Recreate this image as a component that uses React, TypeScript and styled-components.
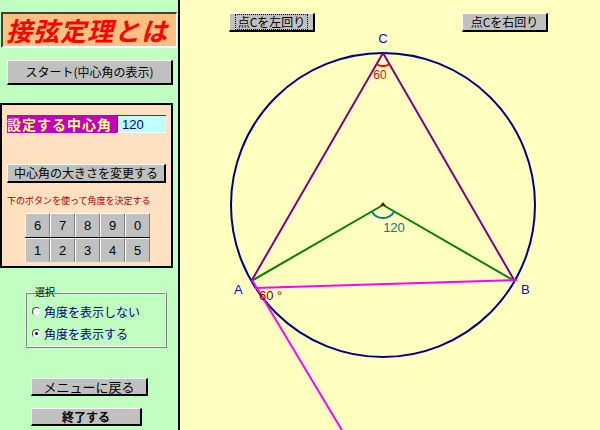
import React from 'react';
import styled, { createGlobalStyle } from 'styled-components';

const GlobalStyle = createGlobalStyle`
  html, body {
    margin: 0;
    padding: 0;
    width: 600px;
    height: 430px;
    overflow: hidden;
  }
  * {
    box-sizing: border-box;
  }
  body {
    font-family: "Noto Sans CJK JP", "Noto Sans", sans-serif;
  }
`;

const Screen = styled.div`
  display: flex;
  width: 600px;
  height: 430px;
`;

const Sidebar = styled.div`
  width: 180px;
  height: 430px;
  background: #c0ffc0;
  border-right: 2px solid #000;
  display: flex;
  flex-direction: column;
  align-items: flex-start;
`;

const Title = styled.div`
  margin: 12px 0 0 1px;
  width: 176px;
  height: 36px;
  background: #ffc080;
  border-style: solid;
  border-width: 2px 1px 2px 2px;
  border-color: #404040 #fff #fff #404040;
  color: #ff0000;
  font-size: 26px;
  font-weight: bold;
  font-style: italic;
  letter-spacing: 1px;
  line-height: 31px;
  padding-left: 3px;
  white-space: nowrap;
`;

const Button = styled.button<{ $w: number; $h: number; $size?: number; $bold?: boolean }>`
  width: ${p => p.$w}px;
  height: ${p => p.$h}px;
  padding: 0;
  background: #c0c0c0;
  border-style: solid;
  border-width: 1px 2px 2px 1px;
  border-color: #fff #000 #000 #fff;
  font-family: "Noto Sans CJK JP", sans-serif;
  font-size: ${p => p.$size ?? 12}px;
  font-weight: ${p => (p.$bold ? 'bold' : 'normal')};
  color: #000;
  line-height: 1;
  display: flex;
  align-items: center;
  justify-content: center;
  white-space: nowrap;
`;

const SideButton = styled(Button)<{ $top: number; $left: number }>`
  margin-top: ${p => p.$top}px;
  margin-left: ${p => p.$left}px;
`;

const Panel = styled.div`
  margin-top: 18px;
  width: 173px;
  height: 165px;
  background: #ffe0c0;
  border: 2px solid #000;
  display: flex;
  flex-direction: column;
  align-items: flex-start;
  padding-left: 5px;
`;

const SettingRow = styled.div`
  margin-top: 10px;
  display: flex;
  height: 18px;
`;

const SettingLabel = styled.div`
  width: 110px;
  height: 18px;
  background: #c000c0;
  color: #ffff80;
  font-size: 14px;
  font-weight: bold;
  line-height: 18px;
  letter-spacing: 1px;
  white-space: nowrap;
`;

const SettingInput = styled.input`
  width: 49px;
  height: 18px;
  background: #c0ffff;
  border-style: solid;
  border-width: 1px 0 1px 1px;
  border-color: #404040 #fff #fff #404040;
  color: #000080;
  font-family: "Liberation Sans", sans-serif;
  font-size: 13px;
  padding: 0 0 0 4px;
  outline: none;
`;

const Hint = styled.div`
  margin-top: 12px;
  color: #a00000;
  font-size: 9px;
  line-height: 11px;
  white-space: nowrap;
`;

const NumPad = styled.div`
  margin: 7px 0 0 18px;
  width: 125px;
  display: grid;
  grid-template-columns: repeat(5, 25px);
  grid-auto-rows: 24px;
  row-gap: 1px;
  background: #000;
`;

const NumKey = styled.div`
  background: #c0c0c0;
  border-style: solid;
  border-width: 1px 1px 0 1px;
  border-color: #fff #808080 #808080 #fff;
  display: flex;
  align-items: center;
  justify-content: center;
  font-family: "Liberation Sans", sans-serif;
  font-size: 13px;
  color: #000;
`;

const Group = styled.fieldset`
  margin: 18px 0 0 25px;
  padding: 0 0 0 6px;
  width: 141px;
  height: 61px;
  border: 1px solid #fff;
  box-shadow: inset 1px 1px 0 #808080, 1px 1px 0 #808080;
  display: flex;
  flex-direction: column;
`;

const Legend = styled.legend`
  padding: 0 2px;
  margin-left: 1px;
  font-size: 10px;
  line-height: 12px;
  color: #000;
`;

const RadioRow = styled.label`
  display: flex;
  align-items: center;
  gap: 3px;
  height: 18px;
  margin-top: 4px;
  color: #000080;
  font-size: 12px;
  white-space: nowrap;
`;

const RadioDot = styled.span<{ $on?: boolean }>`
  width: 9px;
  height: 9px;
  border-radius: 50%;
  background: #fff;
  border: 1px solid #404040;
  border-right-color: #e0e0e0;
  border-bottom-color: #e0e0e0;
  display: flex;
  align-items: center;
  justify-content: center;
  &::after {
    content: '';
    width: 3px;
    height: 3px;
    border-radius: 50%;
    background: ${p => (p.$on ? '#000' : 'transparent')};
  }
`;

const Canvas = styled.div`
  flex: 1;
  height: 430px;
  background: #ffffc0;
  display: grid;
`;

const Toolbar = styled.div`
  grid-area: 1 / 1;
  align-self: start;
  display: flex;
  gap: 147px;
  padding: 13px 0 0 49px;
  z-index: 1;
`;

const FocusText = styled.span`
  border: 1px dotted #000;
  padding: 1px 2px;
`;

const Diagram = styled.svg`
  grid-area: 1 / 1;
  width: 420px;
  height: 430px;
  display: block;
`;

// circle geometry in canvas coordinates
const O = { x: 203, y: 205 };
const R = 152;
const C = { x: 203, y: O.y - R };
const A = { x: O.x - R * Math.sin(Math.PI / 3), y: O.y + R * Math.cos(Math.PI / 3) };
const B = { x: O.x + R * Math.sin(Math.PI / 3), y: A.y };

const polar = (c: { x: number; y: number }, r: number, deg: number) => ({
  x: c.x + r * Math.cos((deg * Math.PI) / 180),
  y: c.y + r * Math.sin((deg * Math.PI) / 180),
});

const arc = (c: { x: number; y: number }, r: number, from: number, to: number) => {
  const s = polar(c, r, from);
  const e = polar(c, r, to);
  return `M${s.x} ${s.y} A${r} ${r} 0 0 1 ${e.x} ${e.y}`;
};

const keys = ['6', '7', '8', '9', '0', '1', '2', '3', '4', '5'];

const App: React.FC = () => {
  return (
    <Screen>
      <GlobalStyle />
      <Sidebar>
        <Title>接弦定理とは</Title>
        <SideButton $top={12} $left={7} $w={166} $h={25} $size={12}>
          スタート(中心角の表示)
        </SideButton>
        <Panel>
          <SettingRow>
            <SettingLabel>設定する中心角</SettingLabel>
            <SettingInput defaultValue="120" readOnly />
          </SettingRow>
          <SideButton $top={31} $left={0} $w={159} $h={19} $size={12}>
            中心角の大きさを変更する
          </SideButton>
          <Hint>下のボタンを使って角度を決定する</Hint>
          <NumPad>
            {keys.map(k => (
              <NumKey key={k}>{k}</NumKey>
            ))}
          </NumPad>
        </Panel>
        <Group>
          <Legend>選択</Legend>
          <RadioRow>
            <RadioDot />
            角度を表示しない
          </RadioRow>
          <RadioRow>
            <RadioDot $on />
            角度を表示する
          </RadioRow>
        </Group>
        <SideButton $top={31} $left={31} $w={117} $h={18} $size={13}>
          メニューに戻る
        </SideButton>
        <SideButton $top={12} $left={31} $w={111} $h={18} $size={12} $bold>
          終了する
        </SideButton>
      </Sidebar>
      <Canvas>
        <Toolbar>
          <Button $w={86} $h={19} $size={12}>
            <FocusText>点Cを左回り</FocusText>
          </Button>
          <Button $w={86} $h={19} $size={12}>
            点Cを右回り
          </Button>
        </Toolbar>
        <Diagram viewBox="0 0 420 430">
          <circle cx={O.x} cy={O.y} r={R} fill="none" stroke="#000080" strokeWidth={2} />
          <line x1={C.x} y1={C.y} x2={A.x} y2={A.y} stroke="#800080" strokeWidth={2} />
          <line x1={C.x} y1={C.y} x2={B.x} y2={B.y} stroke="#800080" strokeWidth={2} />
          <line x1={O.x} y1={O.y} x2={A.x} y2={A.y} stroke="#008000" strokeWidth={2} />
          <line x1={O.x} y1={O.y} x2={B.x} y2={B.y} stroke="#008000" strokeWidth={2} />
          <line x1={75} y1={288} x2={337} y2={280} stroke="#ff00ff" strokeWidth={2} />
          <line x1={72} y1={280} x2={163} y2={432} stroke="#ff00ff" strokeWidth={2} />
          <path d={arc(C, 13, 60, 120)} fill="none" stroke="#ff0000" strokeWidth={2} />
          <path d={arc(O, 13, 30, 150)} fill="none" stroke="#008080" strokeWidth={2} />
          <polygon points={`${O.x - 3},${O.y + 1} ${O.x + 3},${O.y + 1} ${O.x},${O.y - 3}`} fill="#800000" />
          <g fontFamily="Liberation Sans, sans-serif" fontSize={13}>
            <text x={C.x} y={43} fill="#0000ff" textAnchor="middle">C</text>
            <text x={200} y={79} fill="#ff0000" textAnchor="middle" fontSize={12}>60</text>
            <text x={214} y={232} fill="#008080" textAnchor="middle">120</text>
            <text x={54} y={294} fill="#0000ff">A</text>
            <text x={341} y={294} fill="#0000ff">B</text>
            <text x={79} y={300} fill="#800000">60 °</text>
          </g>
        </Diagram>
      </Canvas>
    </Screen>
  );
};

export default App;
